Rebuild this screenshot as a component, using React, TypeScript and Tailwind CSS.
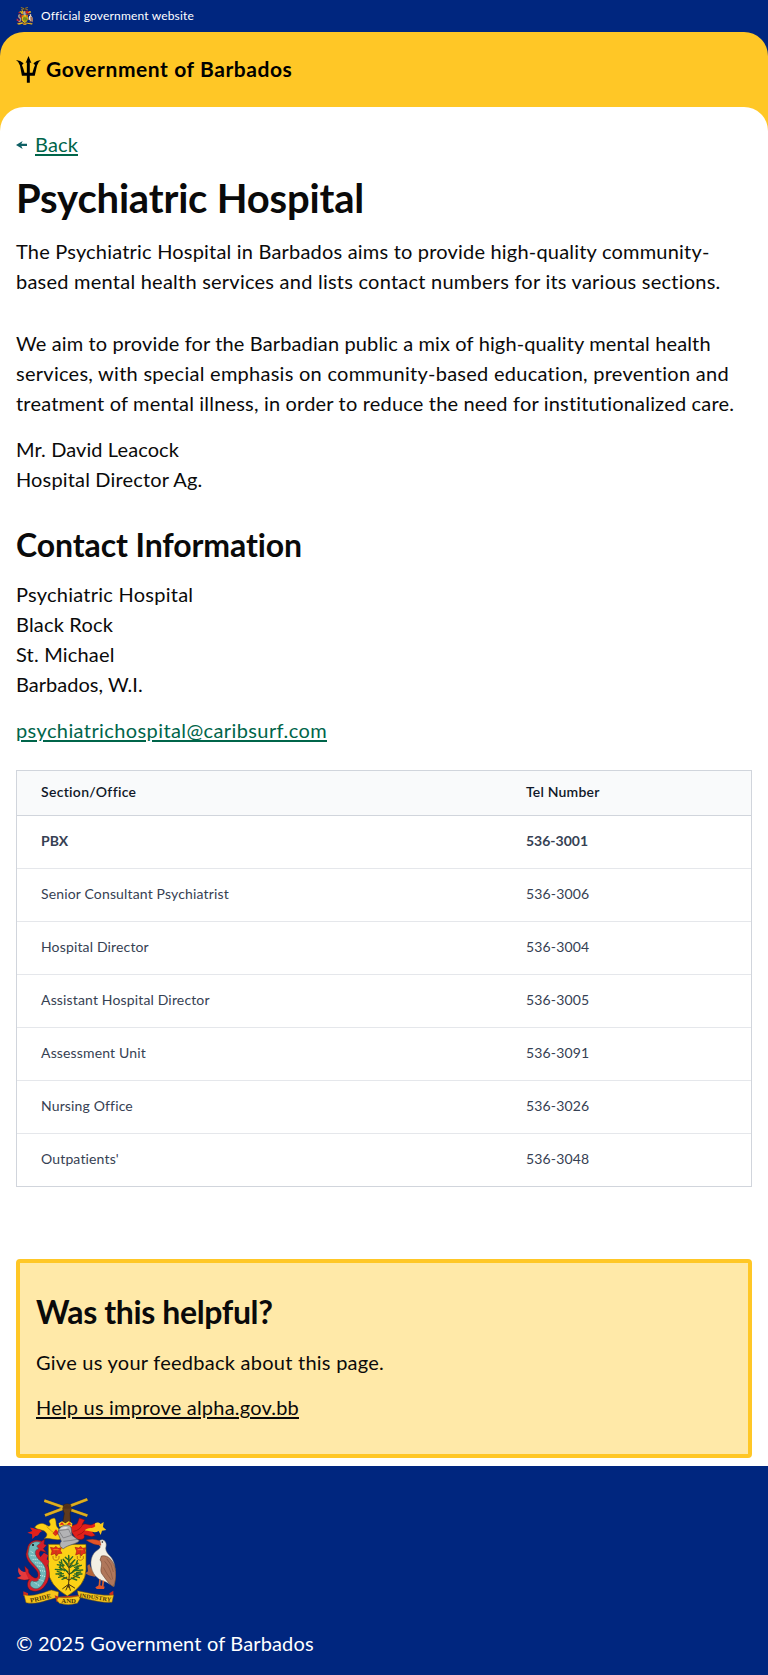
import type { ReactNode } from "react";

function Crest({ className, motto = false }: { className: string; motto?: boolean }) {
  return (
    <svg viewBox="48 54 300 324" className={className} role="img" aria-label="Coat of arms of Barbados">
      {/* crossed sugar cane held in a fist */}
      <g strokeLinecap="butt">
        <path d="M133 62 262 107M262 58 135 106" stroke="#8a6a14" strokeWidth="9" />
        <path d="M133 62 262 107M262 58 135 106" stroke="#dcae22" strokeWidth="7.5" />
      </g>
      <path d="M191 74q10-6 21 0l2 14-4 12 2 29h-24l5-29-5-13z" fill="#5e3a1e" stroke="#2c1a0c" strokeWidth="1.5" />
      <path d="M195 76v10M201 74v12M207 76v10" stroke="#2c1a0c" strokeWidth="1.5" />

      {/* mantling */}
      <path d="M184 178C160 182 150 172 132 176 142 168 144 162 134 154 124 148 112 150 104 142 112 130 128 126 140 136 148 142 154 136 149 128 144 122 152 116 163 114 172 122 164 134 174 144 180 150 186 160 184 178Z" fill="#fcd116" stroke="#7a5b05" strokeWidth="1.5" />
      <path d="M118 148C108 150 104 142 90 143L97 153 82 158 96 163 97 177 106 168C118 170 116 156 126 154Z" fill="#e0201b" />
      <path d="M158 160 168 148 178 160 166 168Z" fill="#e0201b" />
      <path d="M140 140q16 16 30 24" fill="none" stroke="#b98a05" strokeWidth="2" />
      <path d="M208 146C214 132 226 138 232 130L238 114 254 120 246 134C262 128 268 140 280 132 294 124 304 138 292 148 276 146 270 152 286 166 270 176 256 160 252 166 258 178 238 182 228 176Z" fill="#e0201b" stroke="#7b0e0c" strokeWidth="1.5" />
      <path d="M252 152C264 140 280 148 286 138 280 130 292 122 302 132L311 126 309 141 319 150 306 152 302 165 296 153C282 162 266 150 252 152Z" fill="#f9c81a" />
      <path d="M220 154q20-2 30-24M232 166q14-4 24-16" fill="none" stroke="#8e110f" strokeWidth="2" />
      <path d="M176 130 186 124 196 130 206 124 217 130 216 140H178Z" fill="#fcd116" />
      <path d="M178 134l8-7 7 7zM200 134l8-7 7 7z" fill="#e0201b" />

      {/* shield */}
      <path d="M145 193H258V270Q257 316 202 348 146 316 145 270Z" fill="#fcd116" stroke="#6d5204" strokeWidth="2" />

      {/* helmet */}
      <path d="M176 150C180 138 194 134 206 136 216 140 214 150 216 166L238 182C232 192 204 194 190 206 180 202 176 194 184 184L174 160Z" fill="#b3b3b5" stroke="#4d4d50" strokeWidth="2" />
      <path d="M176 152 206 148 214 166 190 174ZM190 184q22-2 42-6" fill="none" stroke="#59595c" strokeWidth="1.5" />
      <path d="M180 146q12-8 24-4l-6 4z" fill="#e4e4e6" />

      {/* Pride of Barbados flowers */}
      <g fill="#e2301b" stroke="#9a160d" strokeWidth="1.5">
        <path d="M151 202 162 204 168 199 174 205 184 203 181 212 186 220 175 221 170 228 164 221 153 225 156 213Z" />
        <path d="M225 202 236 204 242 199 248 205 257 203 255 212 257 220 249 221 244 228 238 221 227 225 230 213Z" />
      </g>
      <path d="M168 210v24M241 210v24M159 228v8q9 10 18 0v-8M232 228v8q9 10 18 0v-8" fill="none" stroke="#9a4a13" strokeWidth="2" />
      <path d="M160 209h16M233 209h16" stroke="#fcae16" strokeWidth="2" />

      {/* bearded fig tree */}
      <g fill="none" strokeLinecap="round">
        <path d="M205 322 208 282 206 230M208 284 180 252M208 284 238 256M207 300 176 284M207 300 238 284M206 262 190 240M207 262 224 240" stroke="#43300f" strokeWidth="3" />
        <path d="M204 314 188 326M204 316 198 330M207 316 211 331M208 314 224 324" stroke="#43300f" strokeWidth="3" />
        <path d="M206 226v18M196 232l10 8M218 230l-10 12M190 238l12 14M224 240l-12 12M178 246l14 10M172 254l18 4M234 250l-14 8M244 256l-20 6M166 268l20 2M178 262l16 10M236 264l-16 8M248 270l-24 2M168 282l22-1M176 292l16-5M246 282l-22 0M238 293l-18-6M186 298l14-6M230 300l-16-6M194 268l10 8M222 274l-10 6M198 248l6 10M218 256l-8 6M184 240l2 12M232 242l-4 12M172 274l12 4M242 276l-12 2M180 256l2 12M232 258l-2 12M182 278l2 12M230 278l0 12" stroke="#2b6b26" strokeWidth="4.2" />
      </g>

      {/* dolphin */}
      <path d="M84 198C90 184 108 176 124 184L134 178 132 192 140 196 130 206 140 218 122 212C112 222 122 232 136 246 152 264 152 296 136 316 124 334 106 338 90 330 80 322 80 308 88 298L72 300 51 294 64 288 76 274 74 258 86 270C84 280 92 286 98 290 110 300 118 290 112 276 102 258 78 246 78 222Z" fill="#d3202a" stroke="#5f1117" strokeWidth="1.5" />
      <path d="M114 240 132 218 144 226 140 238 148 244 140 260Z" fill="#d3202a" />
      <path d="M88 200C94 186 110 182 122 188L110 198 116 206C100 210 104 228 118 240 142 258 144 290 128 312 120 326 106 330 96 322 88 316 90 306 96 302 112 310 124 298 120 278 114 258 86 246 84 222Z" fill="#6fb9ba" stroke="#1f6569" strokeWidth="1.5" />
      <path d="M92 214 102 220M92 226 108 228M98 238 116 238M106 248 126 250M112 258 134 262M120 272 138 274M120 286 138 290M116 298 132 304M104 308 120 318" stroke="#d5eeee" strokeWidth="3" strokeDasharray="3 3" />
      <path d="M76 276Q62 276 56 262 50 280 64 288L51 294Q68 302 86 298Z" fill="#e33a3d" />
      <circle cx="99" cy="195" r="3" fill="#111" />

      {/* pelican */}
      <path d="M262 257 268 252 272 262 290 284 284 290 266 286 256 280 264 274Z" fill="#b5653a" />
      <path d="M298 182C310 174 322 186 318 200 314 212 324 222 332 230 348 248 350 284 342 320L318 306C300 302 280 290 274 262 270 242 276 222 290 212 302 204 304 200 296 194Z" fill="#f3efe4" stroke="#736b5f" strokeWidth="1.5" />
      <path d="M304 228C326 222 344 246 347 274 349 292 346 308 340 320 328 314 316 296 306 282 296 268 312 252 300 240Z" fill="#b0775b" stroke="#54301f" strokeWidth="1.5" />
      <path d="M314 244q18 20 24 54M310 262q10 20 24 38M320 236q16 16 20 40" fill="none" stroke="#7d4c36" strokeWidth="1.5" />
      <path d="M258 180Q280 174 300 182L303 196Q280 196 258 180Z" fill="#e2542a" stroke="#7b2510" strokeWidth="1" />
      <circle cx="307" cy="186" r="2.5" fill="#111" />
      <path d="M300 298 298 318M310 302 308 320" stroke="#d8622d" strokeWidth="5" />
      <path d="M286 322 298 315 314 320 312 327 290 327Z" fill="#e2542a" />

      {/* motto ribbon */}
      <path d="M70 334 84 340V350L70 348ZM328 340 340 332V346L330 352Z" fill="#cf2a1d" />
      <path d="M72 344C96 352 128 338 154 330L176 336 174 352C144 358 112 376 78 368Z" fill="#f7c51d" stroke="#7a5b05" strokeWidth="1.5" />
      <path d="M232 332C264 338 300 348 341 345L336 367C300 370 262 356 236 352Z" fill="#f7c51d" stroke="#7a5b05" strokeWidth="1.5" />
      <path d="M164 346 176 350 238 346 232 362 170 366Z" fill="#c63319" />
      <path d="M176 352Q204 356 236 348L240 356 232 370Q204 378 178 370L170 360Z" fill="#f7c51d" stroke="#7a5b05" strokeWidth="1.5" />
      {motto && (
        <g className="font-['Liberation_Serif',serif] font-bold" fill="#4a3607">
          <text x="89" y="361" fontSize="19" textLength="64" lengthAdjust="spacingAndGlyphs" transform="rotate(-13 120 352)">PRIDE</text>
          <text x="184" y="370" fontSize="19" textLength="44" lengthAdjust="spacingAndGlyphs">AND</text>
          <text x="238" y="358" fontSize="18" textLength="96" lengthAdjust="spacingAndGlyphs" transform="rotate(8 284 352)">INDUSTRY</text>
        </g>
      )}
    </svg>
  );
}

function Trident() {
  return (
    <svg viewBox="48 168 76 82" className="h-[27px] w-[25px] shrink-0" fill="#000" aria-hidden="true">
      <path d="M86 168 95 190Q92 188 90 187V219H98Q102 203 106 195 103 193 101 190 110 181 124 180 115 185 112 197L105 228H90V249H81V228H66L60 197Q57 185 48 180 62 181 71 190 69 193 66 195 70 203 74 219H81V187Q79 188 77 190Z" />
    </svg>
  );
}

function BackArrow() {
  return (
    <svg viewBox="49 424 33 24" className="mt-px h-2 w-[11px] shrink-0" fill="#0e5f64" aria-hidden="true">
      <path d="M49 436 69 424 65 432.5H82V439H65L69 448Z" />
    </svg>
  );
}

function Line({ className, children }: { className: string; children: ReactNode }) {
  return <span className={`block whitespace-nowrap ${className}`}>{children}</span>;
}

const offices: [string, string][] = [
  ["Senior Consultant Psychiatrist", "536-3006"],
  ["Hospital Director", "536-3004"],
  ["Assistant Hospital Director", "536-3005"],
  ["Assessment Unit", "536-3091"],
  ["Nursing Office", "536-3026"],
  ["Outpatients'", "536-3048"],
];

function PhoneTable() {
  return (
    <table className="mt-[25px] w-full table-fixed border-separate border-spacing-0 border border-[#d1d5dc] text-left text-sm leading-5">
      <thead className="bg-[#f9fafb] text-[#101828]">
        <tr>
          <th className="h-[45px] w-[485px] border-b border-[#d1d5dc] pb-0.5 pl-6 font-semibold tracking-[0.3px]">Section/Office</th>
          <th className="h-[45px] border-b border-[#d1d5dc] pb-0.5 pl-6 font-semibold tracking-[0.2px]">Tel Number</th>
        </tr>
      </thead>
      <tbody className="text-[#364153]">
        <tr className="font-bold">
          <td className="h-[53px] border-b border-[#e5e7eb] pb-0.5 pl-6">PBX</td>
          <td className="h-[53px] border-b border-[#e5e7eb] pb-0.5 pl-6">536-3001</td>
        </tr>
        {offices.map(([name, tel], i) => {
          const cell = i === offices.length - 1 ? "h-[52px] pb-0.5 pl-6" : "h-[53px] border-b border-[#e5e7eb] pb-0.5 pl-6";
          return (
            <tr key={name}>
              <td className={`${cell} tracking-[0.15px]`}>{name}</td>
              <td className={`${cell} tracking-[0.16px]`}>{tel}</td>
            </tr>
          );
        })}
      </tbody>
    </table>
  );
}

export default function App() {
  return (
    <div className="flex min-h-[1675px] flex-col bg-white font-[Lato,sans-serif] text-xl leading-[30px] text-[#0a0a0a]">
      <div className="bg-[#00267f]">
        <div className="flex h-8 items-center gap-2 px-4">
          <Crest className="h-[18px] w-[17px]" />
          <span className="text-xs tracking-[0.16px] text-white">Official government website</span>
        </div>
        <div className="rounded-t-3xl bg-[#ffc726]">
          <header className="flex h-[75px] items-center gap-[5px] px-4">
            <Trident />
            <span className="pb-px text-[21px] font-bold tracking-[0.57px] text-black">Government of Barbados</span>
          </header>
          <div className="h-6 rounded-t-3xl bg-white" />
        </div>
      </div>

      <main className="-mt-0.5 px-4">
        <a className="flex items-center gap-2 text-[#00654a]" href="#">
          <BackArrow />
          <span className="tracking-[0.14px] underline decoration-2 underline-offset-2">Back</span>
        </a>

        <h1 className="mt-4 text-[40px] leading-[46px] font-bold tracking-[-0.18px]">Psychiatric Hospital</h1>

        <p className="mt-[15px]">
          <Line className="tracking-[0.196px]">The Psychiatric Hospital in Barbados aims to provide high-quality community-</Line>
          <Line className="tracking-[0.234px]">based mental health services and lists contact numbers for its various sections.</Line>
        </p>
        <p className="mt-8">
          <Line className="tracking-[0.134px]">We aim to provide for the Barbadian public a mix of high-quality mental health</Line>
          <Line className="tracking-[0.264px]">services, with special emphasis on community-based education, prevention and</Line>
          <Line className="tracking-[0.18px]">treatment of mental illness, in order to reduce the need for institutionalized care.</Line>
        </p>
        <p className="mt-4">
          <Line className="tracking-[0.1px]">Mr. David Leacock</Line>
          <Line className="tracking-[0.16px]">Hospital Director Ag.</Line>
        </p>

        <h2 className="mt-[31px] text-[32px] leading-10 font-bold tracking-[-0.1px]">Contact Information</h2>
        <address className="mt-3.5 not-italic">
          <Line className="tracking-[0.25px]">Psychiatric Hospital</Line>
          <Line className="tracking-[0.185px]">Black Rock</Line>
          <Line className="tracking-[0.18px]">St. Michael</Line>
          <Line className="tracking-[0.02px]">Barbados, W.I.</Line>
        </address>
        <p className="mt-4">
          <a className="tracking-[0.398px] text-[#00654a] underline decoration-2 underline-offset-2" href="#">psychiatrichospital@caribsurf.com</a>
        </p>

        <PhoneTable />

        <section className="mt-[72px] mb-2 h-[199px] rounded-sm border-4 border-[#ffc726] bg-[#ffe9a8] px-4 pt-[29px]">
          <h2 className="text-[32px] leading-10 font-bold tracking-[-0.37px]">Was this helpful?</h2>
          <p className="mt-[15px] tracking-[0.253px]">Give us your feedback about this page.</p>
          <p className="mt-[15px]">
            <a className="tracking-[0.2px] underline decoration-2 underline-offset-2" href="#">Help us improve alpha.gov.bb</a>
          </p>
        </section>
      </main>

      <footer className="flex grow flex-col bg-[#00267f] px-4 pt-8 text-white">
        <Crest className="h-[108px] w-[100px]" motto />
        <p className="mt-[22px] tracking-[0.15px]">© 2025 Government of Barbados</p>
      </footer>
    </div>
  );
}
